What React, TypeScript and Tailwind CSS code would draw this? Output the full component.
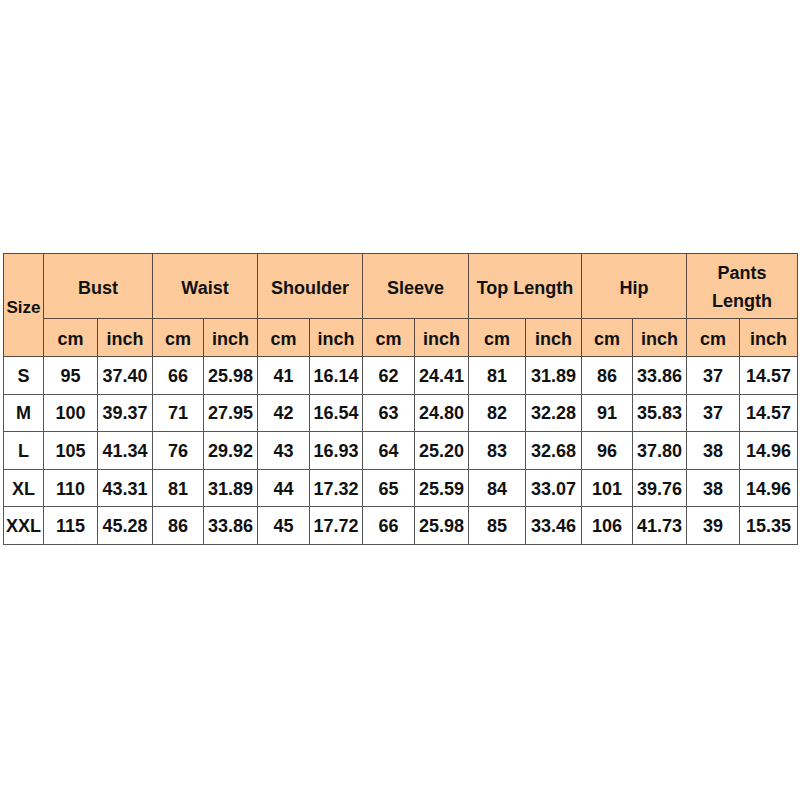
import React from 'react';

const groups = ['Bust', 'Waist', 'Shoulder', 'Sleeve', 'Top Length', 'Hip'];

// column widths in px, Size first then cm/inch pairs
const widths = [40, 54, 55, 51, 54, 52, 53, 52, 54, 57, 56, 51, 54, 53, 58];

const rows: string[][] = [
    ['S', '95', '37.40', '66', '25.98', '41', '16.14', '62', '24.41', '81', '31.89', '86', '33.86', '37', '14.57'],
    ['M', '100', '39.37', '71', '27.95', '42', '16.54', '63', '24.80', '82', '32.28', '91', '35.83', '37', '14.57'],
    ['L', '105', '41.34', '76', '29.92', '43', '16.93', '64', '25.20', '83', '32.68', '96', '37.80', '38', '14.96'],
    ['XL', '110', '43.31', '81', '31.89', '44', '17.32', '65', '25.59', '84', '33.07', '101', '39.76', '38', '14.96'],
    ['XXL', '115', '45.28', '86', '33.86', '45', '17.72', '66', '25.98', '85', '33.46', '106', '41.73', '39', '15.35'],
];

const head = 'border border-[#5a4a3e] bg-[#fdcb9b] text-center align-middle';
const cell = 'border border-[#555] bg-white text-center align-middle px-0 pt-[2px] pb-0 h-[37.6px]';

export default function App() {
    return (
        <div className="min-h-screen bg-white pt-[253px] px-[3px] font-['Liberation_Sans',Arial,sans-serif] text-[18px] font-bold text-[#111]">
            <table className="table-fixed border-collapse w-[795px]">
                <colgroup>
                    {widths.map((w, i) => (
                        <col key={i} style={{ width: w }} />
                    ))}
                </colgroup>
                <thead>
                    <tr className="h-[65px]">
                        <th rowSpan={2} className={head + ' px-0 pt-[5px] pb-0 text-[17px]'}>
                            Size
                        </th>
                        {groups.map((g) => (
                            <th key={g} colSpan={2} className={head + ' px-0 pt-[4px] pb-0'}>
                                {g}
                            </th>
                        ))}
                        <th colSpan={2} className={head + ' px-0 pt-[2px] pb-0 leading-[28px]'}>
                            Pants
                            <br />
                            Length
                        </th>
                    </tr>
                    <tr className="h-[38px]">
                        {Array.from({ length: 7 }).flatMap((_, i) => [
                            <th key={'c' + i} className={head + ' px-0 pt-[3px] pb-0'}>
                                cm
                            </th>,
                            <th key={'i' + i} className={head + ' px-0 pt-[3px] pb-0'}>
                                inch
                            </th>,
                        ])}
                    </tr>
                </thead>
                <tbody>
                    {rows.map((r) => (
                        <tr key={r[0]}>
                            {r.map((v, j) => (
                                <td key={j} className={cell}>
                                    {v}
                                </td>
                            ))}
                        </tr>
                    ))}
                </tbody>
            </table>
        </div>
    );
}
